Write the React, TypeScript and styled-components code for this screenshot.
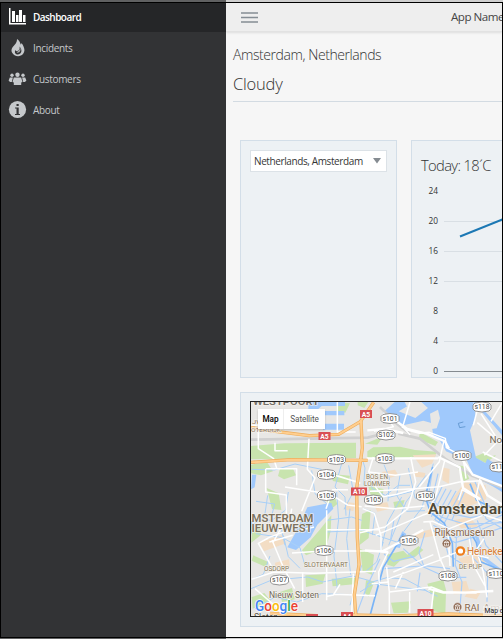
import React from "react";
import styled, { createGlobalStyle } from "styled-components";

const Global = createGlobalStyle`
  * { box-sizing: border-box; }
  body { margin: 0; overflow: hidden; background: #fff; font-family: "Open Sans", "Noto Sans", sans-serif; }
  svg { display: block; flex: none; }
`;

const Shell = styled.div`
  width: 503px;
  height: 639px;
  padding-top: 2px;
  padding-bottom: 1px;
  background: linear-gradient(90deg, #606162 226px, #cfcfcf 226px);
`;
const Window = styled.div`
  display: flex;
  height: 636px;
  border: 1px solid #000;
  overflow: hidden;
`;
const Sidebar = styled.nav`
  flex: 0 0 225px;
  background: #323335;
`;
const NavItem = styled.div<{ $active?: boolean }>`
  display: flex;
  align-items: center;
  height: ${(p) => (p.$active ? 29 : 31)}px;
  padding: 0 0 ${(p) => (p.$active ? 2 : 0)}px 7px;
  gap: 6px;
  color: ${(p) => (p.$active ? "#fff" : "#c5c8cb")};
  background: ${(p) => (p.$active ? "#252628" : "transparent")};
  font-size: 10px;
  font-weight: ${(p) => (p.$active ? 600 : 400)};
  letter-spacing: ${(p) => (p.$active ? "-0.55px" : "-0.32px")};
`;
const Main = styled.main`
  flex: 0 0 276px;
  overflow: hidden;
  background: #f6f6f6;
`;
const AppBar = styled.header`
  display: flex;
  align-items: center;
  justify-content: space-between;
  height: 29px;
  padding-left: 15px;
  background: #eee;
  border-bottom: 1px solid #e2e2e2;
  box-shadow: 0 1px 2px #ddd;
`;
const AppName = styled.span`
  flex: 0 0 51px;
  min-width: 0;
  margin-top: -1px;
  white-space: nowrap;
  font-size: 11.6px;
  letter-spacing: -0.48px;
  color: #454545;
`;
const Heading = styled.div`
  display: flex;
  flex-direction: column;
  height: 70px;
  margin-left: 7px;
  padding-top: 13px;
  border-bottom: 1px solid #d3dbe2;
  color: #333;
  font-weight: 300;
`;
const Place = styled.div`
  height: 27px;
  font-size: 14px;
  line-height: 20px;
  letter-spacing: -0.42px;
`;
const Weather = styled.div`
  font-size: 16.5px;
  line-height: 24px;
  letter-spacing: -0.2px;
`;
const Cards = styled.div`
  display: grid;
  grid-template-columns: 157px 300px;
  grid-template-rows: 238px 235px;
  gap: 14px;
  padding: 38px 0 0 14px;
`;
const Card = styled.section<{ $wide?: boolean }>`
  grid-column: ${(p) => (p.$wide ? "1 / -1" : "auto")};
  padding: ${(p) => (p.$wide ? "8px 9px" : "9px")};
  background: #edf1f4;
  border: 1px solid #d3dee8;
`;
const Select = styled.div`
  display: flex;
  align-items: center;
  justify-content: space-between;
  height: 22px;
  padding: 0 5px 0 3px;
  background: #fff;
  border: 1px solid #dce2e7;
  font-size: 10px;
  letter-spacing: -0.39px;
  color: #353535;
  white-space: nowrap;
`;
const ChartTitle = styled.h2`
  height: 22px;
  margin: 4px 0 0;
  font-size: 14.7px;
  font-weight: 300;
  line-height: 22px;
  letter-spacing: -0.62px;
  color: #333;
`;
const Chart = styled.div`
  position: relative;
`;
const Tick = styled.div<{ $line?: string }>`
  display: grid;
  grid-template-columns: 17px 1fr;
  gap: 6px;
  align-items: center;
  height: 30px;
  font-size: 8.3px;
  line-height: 10px;
  text-align: right;
  color: #333;
  &::after { content: ""; height: 1px; margin-top: 1px; background: ${(p) => p.$line || "transparent"}; }
`;
const Series = styled.svg`
  position: absolute;
  left: 38px;
  top: 24px;
`;
const MapFrame = styled.div`
  position: relative;
  width: 254px;
  height: 216px;
  border: 1px solid #222;
`;
const MapTypes = styled.div`
  position: absolute;
  left: 7px;
  top: 7px;
  display: flex;
  height: 20px;
  background: #fff;
  box-shadow: 0 1px 2px #0003;
`;
const MapType = styled.span<{ $on?: boolean }>`
  width: ${(p) => (p.$on ? 26 : 41)}px;
  text-align: center;
  font: ${(p) => (p.$on ? 500 : 400)} 8.2px/20px Roboto, sans-serif;
  color: ${(p) => (p.$on ? "#000" : "#555")};
  letter-spacing: -0.1px;
  border-right: ${(p) => (p.$on ? "1px solid #eee" : "0")};
`;

const BarsIcon = () => (
  <svg width="19" height="18" viewBox="0 0 19 18" fill="#fff">
    <path d="M1 0h1.500v15H18v1.500H1zM4 3h3v11H4zM8 7h2.500v7H8zM11 2h3v12h-3zM15 7h2.500v7H15z" />
  </svg>
);
const FlameIcon = () => (
  <svg width="19" height="18" viewBox="0 0 19 18">
    <path d="M9 0c2 1 3 3 3.500 5 0 1 1 0 1-1 3 4 4 8 1.500 11-3 3.500-9 2.500-11-1.500-1.500-3 .5-5.500 2.500-7.500S9 2 9 0z" fill="#c5c8cb" />
    <path d="M11.500 7.500c.7 2.500-.4 3.500-1.500 4.300s-2 .4-2.500-.8c-1.500 2.500 0 4.500 2.500 4.500 4-.6 4.500-5 1.500-8z" fill="#323335" />
    <path d="M12 8.500c.3 3-2 3.500-3.500 5 3 .8 5-2 3.500-5z" fill="#a8abad" />
  </svg>
);
const PeopleIcon = () => (
  <svg width="19" height="18" viewBox="0 0 19 18" fill="#c5c8cb">
    <circle cx="9.500" cy="4.800" r="2.200" /><circle cx="4" cy="5.200" r="1.700" /><circle cx="15" cy="5.200" r="1.700" />
    <path d="M5.800 7.600h7.400l1.300 4.400-1.300.5V15H5.800v-2.500L4.500 12zM1.800 7.600h3.100L3.800 12H2L.6 10.600zM14.100 7.600h3.100l1.200 3L17 12h-1.800z" />
  </svg>
);
const InfoIcon = () => (
  <svg width="19" height="19" viewBox="0 0 19 19">
    <circle cx="9.500" cy="9.500" r="8.600" fill="#c5c8cb" />
    <path d="M7 7.500h3.700V14H12v1H7v-1h1.500V8.500H7zM8.500 4h2.200v2H8.500z" fill="#323335" />
  </svg>
);
const MenuIcon = () => (
  <svg width="18" height="13" viewBox="0 0 18 13">
    <path d="M0 2h17M0 6.500h17M0 11h17" stroke="#858d94" strokeWidth="1.400" />
  </svg>
);

const shields: [number, number, string][] = [
  [390, 418.5, "s101"], [386, 435, "S102"], [336.5, 459.5, "s103"], [385, 458.5, "s103"],
  [326.5, 474.5, "s104"], [326.5, 495.5, "s105"], [373.5, 500, "s105"], [482, 407, "s118"],
  [462, 455.5, "s100"], [425.5, 496, "s100"], [499, 467, "s116"], [324, 550.5, "s106"],
  [409, 540.5, "s106"], [279.5, 580, "s107"], [448, 576, "s108"], [496, 573.5, "s110"],
];
const motorways: [number, number, string][] = [
  [366, 414, "A5"], [324.5, 436, "A5"], [359, 491.5, "A10"], [425.5, 613, "A10"], [312, 618, "A4"], [347, 616, "A4"],
];
const places: { x: number; y: number; s: number; w: number; c: string; t: string; b?: boolean }[] = [
  { x: 253, y: 404.5, s: 8.5, w: 66, c: "#77716a", t: "WESTPOORT", b: true },
  { x: 252, y: 424, s: 6, w: 16, c: "#94765a", t: "JWC" },
  { x: 251, y: 431.5, s: 6, w: 30, c: "#94765a", t: "OTERDIJK" },
  { x: 366, y: 479, s: 6.4, w: 22, c: "#857457", t: "BOS EN" },
  { x: 364, y: 485.5, s: 6.4, w: 26, c: "#857457", t: "LOMMER" },
  { x: 251.5, y: 521.5, s: 10.4, w: 62, c: "#7c725f", t: "MSTERDAM", b: true },
  { x: 251.5, y: 532, s: 10.4, w: 61, c: "#7c725f", t: "IEUW-WEST", b: true },
  { x: 304, y: 566.5, s: 6.8, w: 44, c: "#857457", t: "SLOTERVAART" },
  { x: 264, y: 570.5, s: 6.8, w: 25, c: "#857457", t: "OSDORP" },
  { x: 269, y: 598, s: 9, w: 50, c: "#716758", t: "Nieuw Sloten" },
  { x: 254, y: 620, s: 8.3, w: 24, c: "#504b42", t: "Sloten" },
  { x: 428, y: 514, s: 13.8, w: 83, c: "#504936", t: "Amsterdam", b: true },
  { x: 489.5, y: 442.5, s: 9, w: 27, c: "#716758", t: "Noord" },
  { x: 434.5, y: 535.5, s: 10.2, w: 60, c: "#84634b", t: "Rijksmuseum" },
  { x: 467, y: 555, s: 10.2, w: 41, c: "#d97e35", t: "Heineken" },
  { x: 459, y: 568.5, s: 6.8, w: 23, c: "#857457", t: "DE PIJP" },
  { x: 464.5, y: 610.5, s: 9.8, w: 15, c: "#84634b", t: "RAI" },
  { x: 483, y: 610.5, s: 9.8, w: 36, c: "#b6a596", t: "Amster" },
];

/* Base layers of the map are drawn on a grid three times finer than the page. */
const Terrain = () => (
  <g transform="translate(240 392) scale(.33333)" strokeLinejoin="round">
    <g fill="#c8e4ae">
      <path d="M33 162l100-8 215-2v46l-100 1-215 3zM382 178l18-12 80-2 45 10 65 5-8 24-60-8-95 7-45-5zM375 155l55-22-18 25zM385 30l-12 18-20-8v-10zM33 218l48-8 18 28-36 12-30-6zM120 230l38-2 10 22-36 12-18-10zM80 288l36 16 8 50-28-3zM36 410l28-10-2 30-28 22zM40 490l45 20-6 16-44-20zM186 475l52-60 36-45-2 48-14 50-60 22zM270 245l60 6-6 26-45-10zM258 318l20-22 14 40-24 20zM366 366l26-12-6 84-28 22zM360 470l42 18-6 60-28-10zM385 283l46 8-4 26-34-5zM440 488l50-12 12 12 34-26 14 12-26 22-44 10-18 18-20-6zM562 575l48-12 10 38-48 6zM580 605l38-5-2 66-38-10zM290 30l40 4-14 28-26-4zM540 120l54 30-8 12-50-20zM702 195l44-18 22 14-32 22zM752 140l36 18v22l-36-12zM120 600l36-12 8 34-38 8zM196 550l60-3-8 28-50 10zM275 560l75-3-8 20-64 6zM35 615l38-12 20 25-55 22zM378 565l26 3-18 46-12-12zM453 632l60-4-10 34-42 2zM650 220l20 2 18 38-16 8zM460 330l34-6-6 20-24 4z" />
    </g>
    <g fill="#f3ddc4">
      <path d="M518 190l70-3-12 28-30 12zM607 226l22 5-2 44-20-10zM630 330l45-60 62 10 2 42-50 20-42 34zM640 385l48-10 28 30-52 4zM58 450l70-20 10 24-66 24zM105 512l42-10 3 22-44 8zM400 335l42-4 6 20-36 8zM655 500l64-20 18 28-60 24zM520 425l56-14 6 20-50 10zM635 570l44-3 12 38-50 2zM425 240l40-7 10 16-34 12zM318 330l26 3-4 24-28-4zM690 590l34 8-14 24-36-8zM522 238l34 5-2 14-28-3z" />
    </g>
    <g fill="#a0c9fc">
      <path d="M205 30h110v12h-70l-25 22h-15zM255 57h58v13h-60zM246 95h66v18h-63zM428 62l36-32h30l16 32 38-24-6-8h158l8 45-18 40 18 82 60 34 20 18v52l-30-18-56-29-22-50-62-26-18-32-20-15-6-38-24-7-60 14z" />
      <path d="M202 346l72-14 6 18-48 48-20 38-44 38-26-8 28-50zM700 30h10l78 86v16zM742 200l46 30v18l-54-30zM754 108l34 25v12l-38-25zM36 248h13l-5 38-11 6zM487 418l12 8-20 42-14-3zM33 386l12 12-12 30zM700 420l10-4 24 78 50 38-8 6-48-34z" />
    </g>
    <path d="M524 30h20l20 18-38 30-50-20zM570 65l24-12 6 26-10 30-15 2zM714 70l44 28 30 36v50l-40 10-40-24-12-32z" fill="#e8e7e5" />
    <path d="M670 90l-15 4 4 13 17-3" fill="none" stroke="#5a91cb" strokeWidth="2.500" />
    <g fill="none" stroke="#a9d0f7" strokeWidth="3">
      <path d="M35 232l68 2 62-18 80 16M83 310l-10 68-36 20M48 328l56 8-10 40M145 300l-8 54-40 30-63 4M165 390l-40 25 10 45M215 235l10 70 35 30M305 215l-20 70 30 30 3 56M326 220l14 80-28 52M363 188l12 40-4 52M48 425l80 12 52 30 15 54M90 492l-20 55-34 15M130 430l15 64 35 35M260 385l75-10 30 10M260 420l160-8M290 300l6 82-14 110 10 100M330 350l-10 90 12 108M370 350l35 14-8 65M33 590l60-25 110-10 45 15 90-18 55 15M45 650l60-35 65 15 75-25 85 3M380 575l60-18 55 4 65 35M360 600l40-25 155 20 38 18M365 520l-35 120M430 450l-20 60-35 30" />
      <path d="M480 250l-10 60 30 48 55-2M505 228l20 90 50 15M432 218l16 40-4 70M558 250l-60 80-52 130M580 215l-34 132-55 72M485 315l-42 75-20 80M380 420l105 35M385 240l12 50 50 26 70-18M510 280l-35 0-45 35" />
    </g>
    <g fill="none" stroke="#a9cefa" strokeWidth="3.500">
      <path d="M578 230l-15 95 40 50 75 22 110-5M594 245l-18 78 40 38 75 16 97-18M606 284l-35 75M618 290l-44 84M634 293l-50 91M648 297l-54 98M662 300l-50 95M677 290l-42 96M586 384l60 36 65-14 77-38M580 400l66 36 70-20 70-30M576 414l70 38 72-21 68-24M650 420l-4 100 20 50-8 100M690 404l5 90 48 50-2 85M712 385l26 75 50 54M605 420l20 68 45 30M490 470l55 50 85 10M420 500l-40 85-30 80M432 486l28 22 64-16M434 530l110-8 75 34 60 0M720 330l18 50 50 30M705 270l30 68 50 22M555 422l-18 60 15 42M462 382l-10 60M540 542l-8 56" />
    </g>
    <g fill="none" stroke="#79b4f7" strokeWidth="5">
      <path d="M578 225l-22 90 15 45 42 34 24 60 3 70M490 426l-60 100-28 100-12 45M675 392l34 60 13 57 66 28M690 275l20 50 78 38" />
    </g>
    <g fill="none" stroke="#d0d0d0" strokeWidth="8">
      <path d="M33 143l350-6 55-14M420 45l50 50 40 30M475 125l65 15 75 60 83 52 90 35" />
    </g>
    <g fill="none" stroke="#fff" strokeWidth="4.500">
      <path d="M55 115v55l46 30 9 28M78 230h92v50M77 230v70l62 9v72l-40 70M105 152v24h38M230 247l65 5 66 22M250 240l110 32M135 285l138 22 50 32 42 5M207 140l-5 92 23 26-40 100M155 350l-10 65-60 22M96 444l36 86 32 60M88 450l70-20M85 438l-30 16 40 70M35 562l67-22 120 4 124-4 62-2M156 483l106-7 98 1 70-1M260 355v270M260 413h160M340 545l-5 123M280 607l125 4M300 577l-20 32-18 4M258 350l20-57 46 0M400 195l-14 45 20 44 23 30 42-7 58-17M386 240l80 10 68-10M512 195l15 75-24 80-68 55-75 17M390 298l130-8 78-6M368 350l35 14 20 67v46M374 342l90 8 90-8M407 430l140-60 60-20M444 480l-28 60 2 40M440 562l165-60M448 600l126-15 36 14 100 4M448 600v66M448 600l-8-75M509 600v62M582 590l-10 74M570 390l30 110 32 70M600 500l58-22 88 20M550 390l28-2 50 22 100-40M625 432l5 90M688 440l14 82 32 58M565 358l24-52 25-100M598 284l60-14 66-4M656 325l10-32 50 28M720 260l-12 55 25 54 55 18M460 540l120-52M395 575l52-5M490 540l-24 50M732 440l-23 34 20 62 12 80" />
      <path d="M495 112l43 12 30-3 48 18 3 28 44 24M464 78l46 50M510 30l-23 78M612 145l-14 64-60 75M668 185l10 75M700 100l18-70M712 92l76 65M723 65l45 70M753 88l35-58M728 180l60 30M733 190l40-42M430 62l30 42-58 14M33 100l60-2M292 30v90h55M108 650l32 22M45 590l82 70M188 540v90M222 405l-50 12" />
    </g>
    <g fill="none" stroke="#fff" strokeWidth="7">
      <path d="M382 115l50-4 58 12M464 84l38 27 58 14 55 23 12 22M380 199h215M595 195l64 31 10 62 52 34M658 190l40 58 90 35M430 476l120-62M720 265l22 45 46 28M445 480l-70-5M565 590l45 12h65l85-5" />
    </g>
    <g fill="none" stroke="#edac5b" strokeWidth="10">
      <path d="M33 211l120-8 230 2M33 106l55 10 120 15 88-4 65-38 40-58M363 88l4 80-17 120 2 150 5 80-14 90 5 70M90 664l140 7M330 669l140 3 155-6 163 6" />
    </g>
    <g fill="none" stroke="#ffce8e" strokeWidth="6">
      <path d="M33 211l120-8 230 2M33 106l55 10 120 15 88-4 65-38 40-58M363 88l4 80-17 120 2 150 5 80-14 90 5 70M90 664l140 7M330 669l140 3 155-6 163 6" />
    </g>
  </g>
);

const CityMap = () => (
  <svg width="252" height="214" viewBox="251 402 252 214" fontFamily="Roboto, sans-serif">
    <rect x="251" y="402" width="252" height="214" fill="#e8e7e5" />
    <Terrain />
    {places.map((p) => (
      <text key={p.t} x={p.x} y={p.y} fontSize={p.s} textLength={p.w} lengthAdjust="spacingAndGlyphs" fill={p.c} stroke="#f6f4ef" strokeWidth="1.200" paintOrder="stroke" fontWeight={p.b ? 600 : 400}>{p.t}</text>
    ))}
    {shields.map(([x, y, t], i) => (
      <g key={i} transform={`translate(${x} ${y})`}>
        <path d="M-7-4L0-5l7 1 2 2v4l-2 2-7 1-7-1-2-2v-4z" fill="#fff" stroke="#888" strokeWidth=".9" />
        <text y="2.300" textAnchor="middle" fontSize="6.800" fill="#444">{t}</text>
      </g>
    ))}
    {motorways.map(([x, y, t], i) => (
      <g key={i} transform={`translate(${x} ${y})`}>
        <rect x={t === "A10" ? -8 : -6} y="-4" width={t === "A10" ? 16 : 12} height="8" fill="#d94f53" />
        <text y="2.500" textAnchor="middle" fontSize="6.700" fontWeight="700" fill="#fff">{t}</text>
      </g>
    ))}
    <circle cx="460.500" cy="551" r="3.700" fill="#fff" stroke="#ef801f" strokeWidth="2.200" />
    {[[446.5, 543.5], [457.5, 607]].map(([x, y]) => (
      <g key={x} transform={`translate(${x} ${y})`} fill="none">
        <circle r="4.400" fill="#93705b" stroke="#fff" strokeWidth=".5" />
        <path d="M-2.500-1L0-2.500 2.500-1zM-2 0v2M0 0v2M2 0v2M-2.500 2.400h5" stroke="#fff" strokeWidth=".7" />
      </g>
    ))}
    <text x="255" y="611" fontSize="15.500" fontWeight="500" textLength="43" lengthAdjust="spacingAndGlyphs" stroke="#fff" strokeWidth="1.500" paintOrder="stroke">
      <tspan fill="#4285f4">G</tspan><tspan fill="#ea4335">o</tspan><tspan fill="#fbbc05">o</tspan><tspan fill="#4285f4">g</tspan><tspan fill="#34a853">l</tspan><tspan fill="#ea4335">e</tspan>
    </text>
    <rect x="483" y="606" width="20" height="10" fill="#f5f5f5" opacity=".6" />
    <text x="484.500" y="612.500" fontSize="6.800" fill="#222">Map data</text>
  </svg>
);

const ticks = [
  { value: 24 }, { value: 20, line: "#d9dfe4" }, { value: 16, line: "#d9dfe4" },
  { value: 12, line: "#d9dfe4" }, { value: 8 }, { value: 4, line: "#d9dfe4" }, { value: 0, line: "#858b90" },
];
const nav = [
  { label: "Dashboard", Icon: BarsIcon }, { label: "Incidents", Icon: FlameIcon },
  { label: "Customers", Icon: PeopleIcon }, { label: "About", Icon: InfoIcon },
];

export default function App() {
  return (
    <Shell>
      <Global />
      <Window>
        <Sidebar>
          {nav.map(({ label, Icon }, i) => (
            <NavItem key={label} $active={i === 0}><Icon />{label}</NavItem>
          ))}
        </Sidebar>
        <Main>
          <AppBar><MenuIcon /><AppName>App Name</AppName></AppBar>
          <Heading>
            <Place>Amsterdam, Netherlands</Place>
            <Weather>Cloudy</Weather>
          </Heading>
          <Cards>
            <Card>
              <Select>
                Netherlands, Amsterdam
                <svg width="8" height="6" viewBox="0 0 8 6"><path d="M0 0h8L4 5.500z" fill="#858b91" /></svg>
              </Select>
            </Card>
            <Card>
              <ChartTitle>Today: 18´C</ChartTitle>
              <Chart>
                {ticks.map((t) => <Tick key={t.value} $line={t.line}>{t.value}</Tick>)}
                <Series width="60" height="55" viewBox="0 0 60 55"><path d="M1 36.500L60 12.800" stroke="#1c78b4" strokeWidth="2" /></Series>
              </Chart>
            </Card>
            <Card $wide>
              <MapFrame>
                <CityMap />
                <MapTypes><MapType $on>Map</MapType><MapType>Satellite</MapType></MapTypes>
              </MapFrame>
            </Card>
          </Cards>
        </Main>
      </Window>
    </Shell>
  );
}
